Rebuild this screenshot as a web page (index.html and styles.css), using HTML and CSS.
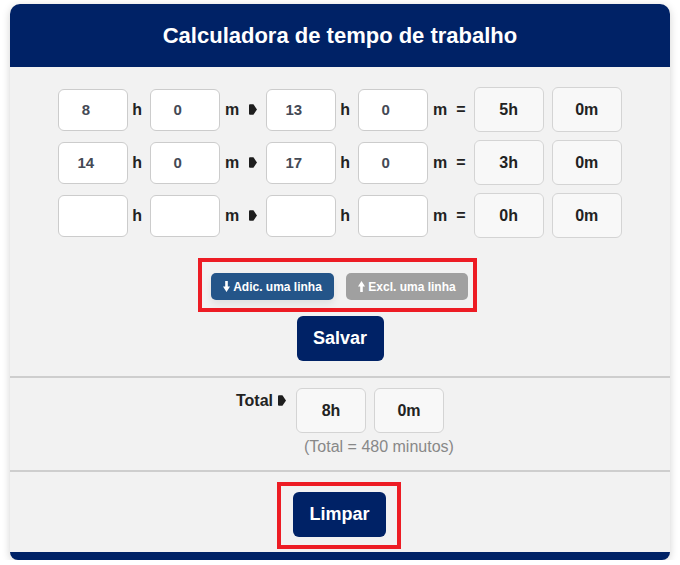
FILE: index.html
```html
<!DOCTYPE html>
<html lang="pt">
<head>
<meta charset="utf-8">
<title>Calculadora de tempo de trabalho</title>
<link rel="stylesheet" href="styles.css">
</head>
<body>
<div class="card">
  <div class="header">Calculadora de tempo de trabalho</div>

  <div class="section rows-section">
    <div class="rows">
      <div class="row">
        <input class="field" type="text" value="8"><span class="lbl lbl-h">h</span>
        <input class="field" type="text" value="0"><span class="lbl lbl-m">m</span>
        <svg class="arrow arrow-row" width="8" height="11" viewBox="0 0 8 11"><path d="M1 0.3 H4.4 L8 5.5 L4.4 10.7 H1 Q0 10.7 0 9.7 V1.3 Q0 0.3 1 0.3 Z"/></svg>
        <input class="field" type="text" value="13"><span class="lbl lbl-h">h</span>
        <input class="field" type="text" value="0"><span class="lbl lbl-m2">m</span><span class="lbl lbl-eq">=</span>
        <div class="result">5h</div><div class="result">0m</div>
      </div>
      <div class="row">
        <input class="field" type="text" value="14"><span class="lbl lbl-h">h</span>
        <input class="field" type="text" value="0"><span class="lbl lbl-m">m</span>
        <svg class="arrow arrow-row" width="8" height="11" viewBox="0 0 8 11"><path d="M1 0.3 H4.4 L8 5.5 L4.4 10.7 H1 Q0 10.7 0 9.7 V1.3 Q0 0.3 1 0.3 Z"/></svg>
        <input class="field" type="text" value="17"><span class="lbl lbl-h">h</span>
        <input class="field" type="text" value="0"><span class="lbl lbl-m2">m</span><span class="lbl lbl-eq">=</span>
        <div class="result">3h</div><div class="result">0m</div>
      </div>
      <div class="row">
        <input class="field" type="text" value=""><span class="lbl lbl-h">h</span>
        <input class="field" type="text" value=""><span class="lbl lbl-m">m</span>
        <svg class="arrow arrow-row" width="8" height="11" viewBox="0 0 8 11"><path d="M1 0.3 H4.4 L8 5.5 L4.4 10.7 H1 Q0 10.7 0 9.7 V1.3 Q0 0.3 1 0.3 Z"/></svg>
        <input class="field" type="text" value=""><span class="lbl lbl-h">h</span>
        <input class="field" type="text" value=""><span class="lbl lbl-m2">m</span><span class="lbl lbl-eq">=</span>
        <div class="result">0h</div><div class="result">0m</div>
      </div>
    </div>

    <div class="highlight highlight-lines">
      <button class="small-btn btn-add" type="button">
        <svg width="7" height="11" viewBox="0 0 7 11"><path d="M2.2 0 H4.8 V5.6 H7 L3.5 11 L0 5.6 H2.2 Z"/></svg>Adic. uma linha
      </button>
      <button class="small-btn btn-del" type="button">
        <svg width="7" height="11" viewBox="0 0 7 11"><path d="M2.2 11 H4.8 V5.4 H7 L3.5 0 L0 5.4 H2.2 Z"/></svg>Excl. uma linha
      </button>
    </div>

    <button class="main-btn btn-save" type="button">Salvar</button>
  </div>

  <div class="section total-section">
    <div class="total-row">
      <span class="total-label">Total</span>
      <svg class="arrow arrow-total" width="8" height="11" viewBox="0 0 8 11"><path d="M1 0.3 H4.4 L8 5.5 L4.4 10.7 H1 Q0 10.7 0 9.7 V1.3 Q0 0.3 1 0.3 Z"/></svg>
      <div class="total-col">
        <div class="total-boxes">
          <div class="result">8h</div><div class="result">0m</div>
        </div>
        <div class="total-note">(Total = 480 minutos)</div>
      </div>
    </div>
  </div>

  <div class="clear-section">
    <div class="highlight highlight-clear">
      <button class="main-btn btn-clear" type="button">Limpar</button>
    </div>
  </div>
</div>
</body>
</html>
```

FILE: styles.css
```css
html, body {
  margin: 0;
  padding: 0;
  background: #ffffff;
}

body {
  font-family: "Liberation Sans", Arial, sans-serif;
  color: #222222;
}

.card {
  width: 660px;
  margin: 4px 10px 0;
  background: #f2f2f2;
  border-radius: 10px 10px 8px 8px;
  border-bottom: 8px solid #002266;
  box-shadow: 0 2px 8px rgba(0, 0, 0, 0.18);
  overflow: hidden;
}

.header {
  height: 63px;
  background: #002266;
  color: #ffffff;
  font-size: 22px;
  font-weight: bold;
  display: flex;
  align-items: center;
  justify-content: center;
}

.section {
  border-bottom: 2px solid #cecece;
  display: flex;
  flex-direction: column;
  align-items: center;
}

.rows-section {
  padding: 20px 0 15px;
}

.rows {
  display: flex;
  flex-direction: column;
  gap: 8px;
}

.row {
  display: flex;
  align-items: center;
  height: 45px;
}

.field {
  box-sizing: border-box;
  width: 70px;
  height: 42px;
  margin: 0;
  padding: 0 15px 0 0;
  border: 1px solid #cccccc;
  border-radius: 6px;
  background: #ffffff;
  font-family: "Liberation Sans", Arial, sans-serif;
  font-size: 15px;
  font-weight: bold;
  color: #444a55;
  text-align: center;
  outline: none;
}

.lbl {
  font-size: 16px;
  font-weight: bold;
  color: #222222;
}

.lbl-h {
  margin: 0 8px 0 4px;
}

.lbl-m {
  margin: 0 10px 0 5px;
}

.lbl-m2 {
  margin: 0 9px 0 5px;
}

.lbl-eq {
  margin-right: 8px;
}

.arrow {
  display: block;
  fill: #1e1e1e;
  flex: none;
}

.arrow-row {
  margin-right: 9px;
}

.result {
  box-sizing: border-box;
  width: 70px;
  height: 45px;
  border: 1px solid #d4d4d4;
  border-radius: 6px;
  background: #f8f8f8;
  display: flex;
  align-items: center;
  justify-content: center;
  font-size: 16px;
  font-weight: bold;
  color: #222222;
}

.result + .result {
  margin-left: 8px;
}

.highlight {
  border: 4px solid #ed1c24;
  display: flex;
}

.highlight-lines {
  margin: 20px 5px 0 0;
  padding: 11px 5px 8px 9px;
  gap: 12px;
}

.small-btn {
  height: 27px;
  border: none;
  border-radius: 5px;
  color: #ffffff;
  font-family: "Liberation Sans", Arial, sans-serif;
  font-size: 12px;
  font-weight: bold;
  display: flex;
  align-items: center;
  justify-content: center;
  gap: 3px;
  padding: 0;
}

.small-btn svg {
  fill: #ffffff;
  display: block;
}

.btn-add {
  width: 123px;
  background: #245589;
  box-shadow: 0 4px 8px rgba(0, 0, 0, 0.08);
}

.btn-del {
  width: 122px;
  background: #a0a0a0;
}

.main-btn {
  height: 45px;
  border: none;
  border-radius: 6px;
  background: #002266;
  color: #ffffff;
  font-family: "Liberation Sans", Arial, sans-serif;
  font-size: 18px;
  font-weight: bold;
  padding: 0;
}

.btn-save {
  width: 87px;
  margin-top: 4px;
}

.total-section {
  padding: 10px 0 14px;
}

.total-row {
  display: flex;
  align-items: flex-start;
}

.total-label {
  font-size: 16px;
  font-weight: bold;
  margin-top: 4px;
  margin-right: 5px;
}

.arrow-total {
  margin-top: 7px;
  margin-right: 10px;
}

.total-col {
  display: flex;
  flex-direction: column;
}

.total-boxes {
  display: flex;
}

.total-note {
  margin: 5px -12px 0 8px;
  font-size: 16px;
  color: #888888;
  white-space: nowrap;
}

.clear-section {
  display: flex;
  justify-content: center;
  padding: 10px 0 3px;
}

.highlight-clear {
  padding: 6px 11px 8px 12px;
  margin-right: 2px;
}

.btn-clear {
  width: 93px;
}
```
